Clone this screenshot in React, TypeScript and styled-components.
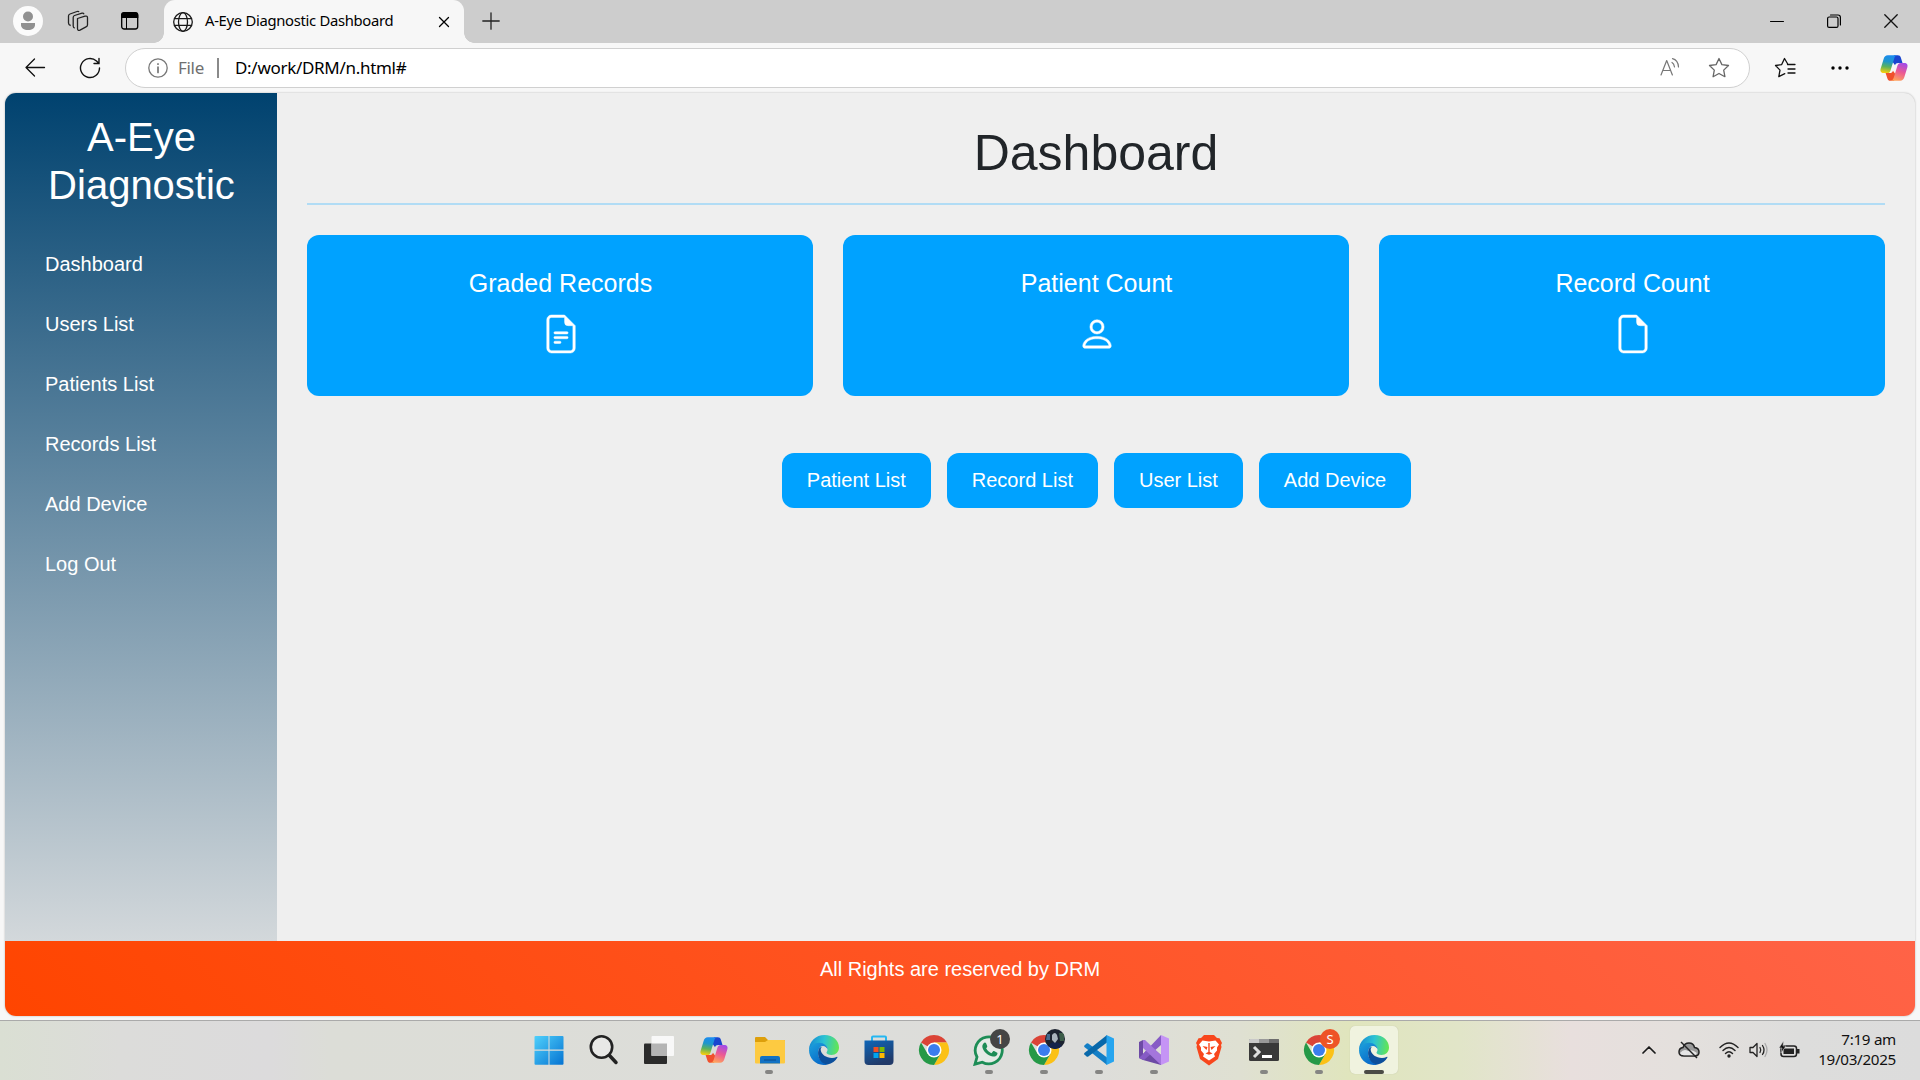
import React from 'react';
import styled, { createGlobalStyle } from 'styled-components';
import { BsFileEarmarkText, BsPerson, BsFileEarmark } from 'react-icons/bs';

const ui = '"Segoe UI", "Noto Sans", "Open Sans", sans-serif';

const Global = createGlobalStyle`
  * { box-sizing: border-box; }
  body { margin: 0; background: #f7f7f7; overflow: hidden; }
`;
const Screen = styled.div`
  width: 1920px; height: 1080px; display: flex; flex-direction: column;
  background: #f7f7f7; font-family: ${ui}; color: #000;
`;
const TabStrip = styled.header`
  height: 43px; background: #cdcdcd; display: flex; align-items: stretch; flex: none;
`;
const StripIcons = styled.div`
  width: 164px; display: flex; align-items: center; padding: 0 0 1px 13px;
  svg { display: block; flex: none; }
`;
const CollectionsIcon = styled.svg`margin-left: 24px;`;
const TabMenuIcon = styled.svg`margin-left: 31px;`;
const Tab = styled.div`
  width: 300px; background: #f7f7f7; border-radius: 11px 11px 0 0; display: flex; align-items: center;
  padding: 0 14px 0 9px; font-size: 14.8px; position: relative;
  &::before, &::after {
    content: ''; position: absolute; bottom: 0; width: 10px; height: 10px;
  }
  &::before { left: -10px; background: radial-gradient(circle at 0 0, #cdcdcd 9.5px, #f7f7f7 10px); }
  &::after { right: -10px; background: radial-gradient(circle at 100% 0, #cdcdcd 9.5px, #f7f7f7 10px); }
`;
const TabTitle = styled.span`
  margin-left: 12px; margin-right: auto; padding-bottom: 3px; line-height: 20px; letter-spacing: -0.3px; white-space: nowrap;
`;
const NewTab = styled.div`padding: 12px 0 0 18px;`;
const WindowButtons = styled.div`
  margin-left: auto; display: flex; gap: 43px; padding: 14px 22px 0 0;
`;
const AddressRow = styled.div`
  height: 50px; display: flex; align-items: center; flex: none; padding: 0 12px 0 24px;
`;
const ReloadIcon = styled.svg`margin-left: 33px;`;
const Address = styled.div`
  width: 1625px; height: 40px; border: 1px solid #d0d0d0; border-radius: 20px; background: #fff;
  margin-left: 24px; display: flex; align-items: center; padding: 0 19px 0 22px; font-size: 17px; letter-spacing: -0.3px;
`;
const Scheme = styled.span`color: #707070; margin-left: 10px; width: 39px; padding-bottom: 2px;`;
const Divider = styled.span`width: 2px; height: 20px; background: #8a8a8a; margin-right: 16px;`;
const Url = styled.span`padding-bottom: 2px; white-space: nowrap;`;
const AddressIcons = styled.div`margin-left: auto; display: flex; gap: 28px; align-items: center;`;
const ToolbarIcons = styled.div`margin-left: auto; display: flex; align-items: center; gap: 35px;`;
const CopilotButton = styled.div`display: flex; margin-left: -4px;`;

const Viewport = styled.div`
  flex: none; width: 1910px; height: 923px; margin: 0 5px; border-radius: 11px; overflow: hidden;
  background: #efefef; box-shadow: 0 0 2px #aaa; display: flex; flex-direction: column;
  font-family: Arial, "Liberation Sans", sans-serif;
`;
const Columns = styled.div`display: flex; height: 848px;`;
const Sidebar = styled.aside`
  width: 272px; background: linear-gradient(180deg, #00426f 0%, #d3d8db 100%); color: #fff; padding-top: 20px;
`;
const Brand = styled.h2`
  margin: 0 0 25px; font-size: 40px; line-height: 48px; font-weight: 400; text-align: center; padding-left: 1px;
`;
const Nav = styled.nav`display: flex; flex-direction: column; padding-left: 40px;`;
const NavLink = styled.a`height: 60px; line-height: 60px; font-size: 20px; color: #fff;`;
const Main = styled.main`flex: 1; padding: 30px;`;
const Title = styled.h1`
  margin: 0; height: 82px; font-size: 50px; line-height: 60px; font-weight: 400; text-align: center;
  color: #212529; border-bottom: 2px solid #b1dcf5;
`;
const Cards = styled.section`display: grid; grid-template-columns: repeat(3, 1fr); gap: 30px; margin-top: 30px;`;
const Card = styled.article`
  height: 161px; border-radius: 12px; background: #00a2ff; color: #fff; display: flex;
  flex-direction: column; align-items: center; padding: 33px 0 0 1px;
  svg { margin-top: 17px; display: block; stroke: #fff; stroke-width: 0.2px; overflow: visible; }
`;
const CardTitle = styled.h3`margin: 0; font-size: 25px; font-weight: 400; line-height: 30px;`;
const Actions = styled.div`display: flex; justify-content: center; gap: 16px; margin-top: 57px; padding-left: 1px;`;
const Action = styled.button`
  height: 55px; padding: 0 25px; border: 0; border-radius: 12px; background: #00a2ff; color: #fff;
  font: 20px Arial, "Liberation Sans", sans-serif;
`;
const Footer = styled.footer`
  flex: 1; background: linear-gradient(45deg, #ff4500, #ff6347); color: #fff; text-align: center;
  font-size: 20px; line-height: 30px; padding-top: 13px;
`;

const Taskbar = styled.footer`
  margin-top: 4px; height: 60px; border-top: 1px solid #aaa; display: flex; align-items: center; padding-bottom: 1px;
  background: linear-gradient(90deg, #dadfd3 0, #dcdcda 120px, #dcdbdc 270px, #dcddd7 330px, #dddddb 1080px, #dfe0d2 1240px, #e0e5bd 1350px, #e1e5c8 1460px, #e8dfdd 1570px, #e4e0dd 1680px, #dddddc 1800px, #dcdcdc);
`;
const Apps = styled.div`display: flex; margin-left: 525px; gap: 7px;`;
const AppSlot = styled.div<{ $active?: boolean; $running?: boolean }>`
  width: 48px; height: 48px; border-radius: 5px; position: relative;
  display: flex; align-items: center; justify-content: center;
  background: ${p => (p.$active ? '#f0f3df' : 'transparent')};
  box-shadow: ${p => (p.$active ? '0 0 1px #b9bc9f' : 'none')};
  svg { display: block; }
  &::after {
    content: ''; position: absolute; bottom: 0; left: 50%; transform: translateX(-50%);
    width: ${p => (p.$active ? 20 : 8)}px; height: 4px; border-radius: 2px;
    background: ${p => (p.$active ? '#4b4b46' : p.$running ? '#858583' : 'transparent')};
  }
`;
const Badge = styled.span<{ $bg: string }>`
  position: absolute; left: 25px; top: 3px; width: 20px; height: 20px; border-radius: 50%;
  background: ${p => p.$bg}; color: #fff; font-size: 13px; line-height: 20px; text-align: center; overflow: hidden;
`;
const Tray = styled.div`margin-left: auto; display: flex; align-items: center; padding-right: 24px;`;
const TrayIcon = styled.svg<{ $gap: number }>`margin-left: ${p => p.$gap}px;`;
const Clock = styled.div`
  width: 78px; margin-left: 18px; font-size: 15.2px; line-height: 20px; text-align: right; color: #111;
  white-space: nowrap; letter-spacing: -0.3px; display: flex; flex-direction: column; align-items: flex-end; padding-bottom: 2px;
`;

const Line = ({ w = 20, h = 20, c = '#1a1a1a', sw = 1.3, children }: any) => (
  <svg width={w} height={h} viewBox={`0 0 ${w} ${h}`} fill="none" stroke={c} strokeWidth={sw} strokeLinecap="round" strokeLinejoin="round">{children}</svg>
);

const Copilot = ({ id }: { id: string }) => (
  <svg width="28" height="26" viewBox="0 0 28 26">
    <defs>
      <linearGradient id={id + 'a'} x1=".5" y1="0" x2=".35" y2="1"><stop offset="0" stopColor="#1b8bf0" /><stop offset=".35" stopColor="#1e96cc" /><stop offset=".65" stopColor="#5cb25c" /><stop offset="1" stopColor="#f9cf0c" /></linearGradient>
      <linearGradient id={id + 'b'} x1=".7" y1="0" x2=".35" y2="1"><stop offset="0" stopColor="#a34be8" /><stop offset=".5" stopColor="#ec5a93" /><stop offset="1" stopColor="#ffa35c" /></linearGradient>
    </defs>
    <path d="M14 .3h3.800c1.700 0 2.500.8 3 2.300L22.500 8h-4.300c-1.800 0-2.600.7-3.200 2.300L12 6z" fill="#1a45cf" />
    <path d="M14 25.700h-3.600c-1.700 0-2.500-.8-3-2.300L5.600 18h4.200c1.800 0 2.600-.7 3.200-2.300l3 4.300z" fill="#f0502c" />
    <path d="M7.800.3h9.500c-1.800.3-2.500 1.300-3 2.900l-3.700 12c-.6 1.900-1.400 2.900-3.500 2.900H3.600C.6 18.100 0 15.900.7 13.600L3.700 3.800C4.400 1.600 5.600.3 7.800.3z" fill={`url(#${id}a)`} />
    <path d="M20.200 25.700h-9.500c1.800-.3 2.500-1.300 3-2.900l3.700-12c.6-1.900 1.400-2.900 3.500-2.900h3.500c3 0 3.600 2.200 2.900 4.500l-3 9.800c-.7 2.200-1.900 3.500-4.100 3.500z" fill={`url(#${id}b)`} />
  </svg>
);
const App32 = ({ children }: any) => <svg width="32" height="32" viewBox="0 0 32 32">{children}</svg>;

const Edge = ({ id }: { id: string }) => (
  <App32>
    <defs>
      <linearGradient id={id + 'a'} x1="0" y1=".3" x2="1" y2=".4"><stop offset="0" stopColor="#1689d4" /><stop offset=".5" stopColor="#2cc3d3" /><stop offset="1" stopColor="#63e653" /></linearGradient>
      <linearGradient id={id + 'b'} x1="0" y1="0" x2=".6" y2="1"><stop offset="0" stopColor="#1da2dd" /><stop offset="1" stopColor="#0869c8" /></linearGradient>
    </defs>
    <path d="M1 16C1 7.300 8 1 16.500 1 25.500 1 31 7 31 13.500c0 4.500-3.200 7.500-7.500 7.500-3 0-5-1-5-2.200 0-.8 1-1.300 1-3.300 0-2.800-2.700-5.500-6.500-5.500C7 10 2.500 13 1 16z" fill={`url(#${id}a)`} />
    <path d="M1 16c1.200-4.500 5.500-7.300 10-7.300 5 0 8.500 3 8.500 6.500-.8-1.900-2.500-3.200-4.500-3.200-3 0-5 3.300-5 7 0 5.500 4.500 10 9.500 11.400C9.500 33 1 25.500 1 16z" fill={`url(#${id}b)`} />
    <path d="M11.800 13.400C8 18 10.500 29.600 19.500 30.400c4.500-.6 8-3.200 9.900-6.800.4-.7-.3-1-.8-.7-1.500.8-3 1.100-4.600 1.100-6 0-10.500-3.400-11.200-7.400-.2-1.200-.2-2.400 1-3.600z" fill="#0c4f9c" />
  </App32>
);
const Chrome = () => (
  <App32>
    <path d="M16 16 3 8.500A15 15 0 0 1 29 8.500H16z" fill="#db4437" />
    <path d="M16 8.500H29A15 15 0 0 1 16 31l6.500-11.300z" fill="#fbc116" />
    <path d="M3 8.500A15 15 0 0 0 16 31l6.500-11.200L16 16 9.600 19.800z" fill="#259947" />
    <circle cx="16" cy="16" r="7.500" fill="#fff" /><circle cx="16" cy="16" r="6" fill="#3b7ded" />
  </App32>
);
const Start = () => (
  <App32>
    <defs><linearGradient id="st" x1="0" y1="0" x2="1" y2="1"><stop offset="0" stopColor="#4fd0fb" /><stop offset="1" stopColor="#0573d2" /></linearGradient></defs>
    <path d="M2.500 2H15.500v13.500H1.500V3q0-1 1-1zM16.500 2h13q1 0 1 1v12.500h-14zM1.500 16.700h14v14h-13q-1 0-1-1zM16.500 16.700h14v13q0 1-1 1h-13z" fill="url(#st)" />
  </App32>
);
const Search = () => <App32><circle cx="13.500" cy="13" r="10.700" fill="#e8e8e6" stroke="#222" strokeWidth="2.600" /><path d="m21.500 21.500 6.500 7" stroke="#222" strokeWidth="3.500" strokeLinecap="round" /></App32>;
const TaskView = () => (
  <App32>
    <rect x="1" y="9.500" width="23" height="20.500" rx="1" fill="#2b2b2b" />
    <rect x="8.500" y="2" width="22.500" height="20" rx="1" fill="#f8f8f8" />
    <path d="M8.500 9.500H24V22H8.500z" fill="#b4b4b4" />
  </App32>
);
const Folder = () => (
  <App32>
    <path d="M2 4q0-1 1-1h9l3 3h16q1 0 1 1v6H2z" fill="#dd9f0b" />
    <path d="M2 8h10l3-2h16q1 0 1 1v21.500q0 1-1 1H3q-1 0-1-1z" fill="#fdca41" />
    <path d="M7 29.500V24q0-2 2-2h16q2 0 2 2v5.500z" fill="#1272c4" /><path d="M11 26h12" stroke="#0b4a8a" />
  </App32>
);
const Store = () => (
  <App32>
    <defs><linearGradient id="ms" x1="0" y1="0" x2=".4" y2="1"><stop offset="0" stopColor="#0f66b8" /><stop offset="1" stopColor="#213a69" /></linearGradient></defs>
    <path d="M9 8V3.500q0-1 1-1h12q1 0 1 1V8" fill="none" stroke="#25b7f1" strokeWidth="2" />
    <path d="M1.500 6.500h29V27q0 4-4 4h-21q-4 0-4-4z" fill="url(#ms)" />
    <path d="M10.500 13h5v5h-5z" fill="#f25022" /><path d="M16.500 13h5v5h-5z" fill="#7fba00" />
    <path d="M10.500 19h5v5h-5z" fill="#00a4ef" /><path d="M16.500 19h5v5h-5z" fill="#ffb900" />
  </App32>
);
const WhatsApp = () => (
  <App32>
    <path d="M2 30.200 4 23A13.500 13.500 0 1 1 9.300 28.200z" fill="#e5ebe6" stroke="#1d8d56" strokeWidth="2.800" />
    <path d="M10.700 9.200c.8-.9 2-.8 2.500.3l1 2.400c.3.700-.2 1.400-1.100 2.400 1.400 2.600 3 3.900 5.300 4.900l1.500-1.700c.5-.6 1-.6 1.600-.3l2.300 1.200c.8.400.8.900.5 1.900-.6 1.700-2.500 2.600-4.400 2.200-5.500-1.100-9.600-5.300-10.500-9.300-.3-1.600.4-3.100 1.300-4z" fill="#1d8d56" />
  </App32>
);
const VSCode = () => (
  <App32>
    <path d="m1.400 11.500 2.200-2q.8-.6 1.700 0L24 23.500V31L1.400 13q-.6-.8 0-1.500z" fill="#147fc6" />
    <path d="m1.400 20.500 2.200 2q.8.600 1.700 0L24 8.500V1L1.400 19q-.6.800 0 1.500z" fill="#0868aa" />
    <path d="M23.500 1 31 4.500v23L23.500 31z" fill="#27a5ef" />
  </App32>
);
const VisualStudio = () => (
  <App32>
    <path d="m1 8 4-2 18 15v10L5 26 1 24zm4 4v8l4-4z" fill="#6d4aa5" fillRule="evenodd" />
    <path d="M23 1v10L6 26l-5-2 4-4L23 1z" fill="#865bc5" />
    <path d="M23 1l8 3.500v23L23 31z" fill="#c594f5" />
    <path d="M7 6 23 21v10L5 14V6z" fill="#a476dc" />
  </App32>
);
const Brave = () => (
  <App32>
    <path d="m11 1-3 3-2.500.3L3 9l1 2-.5 2 3.500 12 9 6.500 9-6.500 3.500-12-.5-2 1-2-2.500-4.700L24 4l-3-3z" fill="#f8471d" />
    <path d="m9.500 6.500 6.500 1 6.500-1 3.500 4-2 3v3l-3 3.500 1 2.500-6 4-6-4 1-2.500-3-3.500v-3l-2-3z" fill="#fff" />
    <path d="m9.500 12 5 1-1 3zM22.500 12l-5 1 1 3zM12.500 19.500l3.500-2 3.500 2-3.500 1.300zM15.300 9h1.400v9h-1.400z" fill="#f8471d" />
  </App32>
);
const Terminal = () => (
  <App32>
    <rect x="1" y="5" width="30" height="22" rx="1.500" fill="#393939" />
    <path d="M1 9V6q0-1 1-1h9v4z" fill="#c9c9c9" /><path d="M11 5h10v4H11z" fill="#999" /><path d="M21 5h9q1 0 1 1v3H21z" fill="#6d6d6d" />
    <path d="m6 13 5 5-5 5" fill="none" stroke="#dedede" strokeWidth="3" /><path d="M14 22.500h10" stroke="#fff" strokeWidth="3" />
  </App32>
);

const navItems = ['Dashboard', 'Users List', 'Patients List', 'Records List', 'Add Device', 'Log Out'];
const cards = [
  { title: 'Graded Records', Icon: BsFileEarmarkText },
  { title: 'Patient Count', Icon: BsPerson },
  { title: 'Record Count', Icon: BsFileEarmark },
];
const actions = ['Patient List', 'Record List', 'User List', 'Add Device'];

export default function App() {
  return (
    <Screen>
      <Global />
      <TabStrip>
        <StripIcons>
          <svg width="30" height="30" viewBox="0 0 30 30"><circle cx="15" cy="15" r="15" fill="#fbfbfb" /><circle cx="15" cy="10.500" r="5" fill="#919191" /><path d="M8 17h14v2c0 3-3 5-7 5s-7-2-7-5z" fill="#919191" /></svg>
          <CollectionsIcon width="22" height="22" viewBox="0 0 22 22" fill="none" stroke="#222" strokeWidth="1.300" strokeLinejoin="round">
            <path d="m10.500 8.500 7.500-2.300q2.500-.7 2.500 1.500v7q0 1.500-1.500 2.200l-6 3.200q-2.500 1-2.500-1.500v-8.600q0-1.200 0-1.500zM7.700 18q-1.500-.3-1.500-2V7.500q0-1.500 1.300-2l7.500-2.300q1.500-.3 2 1M3.700 15.500Q1.500 15 1.500 13V6q0-1.500 1.500-2l7-2.500q1.500-.5 2 .5" />
          </CollectionsIcon>
          <TabMenuIcon width="20" height="20" viewBox="0 0 20 20"><rect x="1.700" y="2" width="16" height="16" rx="2.500" fill="none" stroke="#000" strokeWidth="1.300" /><path d="M1 7V4q0-3 3-3h11.300q3 0 3 3v3z" /><path d="M6.500 7v11" stroke="#000" /></TabMenuIcon>
        </StripIcons>
        <Tab>
          <Line sw={1.300}><circle cx="10" cy="10" r="9.300" /><ellipse cx="10" cy="10" rx="4.500" ry="9.300" /><path d="M1.500 6.700h17M1.500 13.300h17" /></Line>
          <TabTitle>A-Eye Diagnostic Dashboard</TabTitle>
          <Line w={12} h={12} c="#000"><path d="m1.500 1.500 9 9m0-9-9 9" /></Line>
        </Tab>
        <NewTab><Line w={18} h={18} c="#222"><path d="M9 .8v16.400M.8 9h16.400" /></Line></NewTab>
        <WindowButtons>
          <Line w={14} h={14} c="#000" sw={1}><path d="M.5 7.500h13" /></Line>
          <Line w={14} h={14} c="#000" sw={1.200}><rect x=".6" y="3" width="10.400" height="10.400" rx="1.500" /><path d="M3.500 1H11q2.400 0 2.400 2.400V11" /></Line>
          <Line w={14} h={14} c="#111"><path d="m.8.800 12.400 12.400M13.200.8.800 13.200" /></Line>
        </WindowButtons>
      </TabStrip>
      <AddressRow>
        <Line w={22} h={20} c="#111"><path d="M20.500 9.500H2m8.500-8.500L2 9.500l8.500 8.500" /></Line>
        <ReloadIcon width="22" height="22" viewBox="0 0 22 22" fill="none" stroke="#111" strokeWidth="1.400" strokeLinecap="round"><path d="M20.500 11a9.500 9.500 0 1 1-3-6.900L20 6.500M20 1.500v5h-5" /></ReloadIcon>
        <Address>
          <Line c="#777"><circle cx="10" cy="10" r="9.200" /><path d="M10 9v5.500M10 5.900v.3" strokeWidth="1.700" /></Line>
          <Scheme>File</Scheme><Divider />
          <Url>D:/work/DRM/n.html#</Url>
          <AddressIcons>
            <Line c="#777" sw={1.200}><path d="m1 17 5.700-14.500L12.400 17M3 12.500h7.400M12 4.500q2 1 2.500 4.500M12.500.7Q18 2 18.500 9" /></Line>
            <Line w={22} h={22} c="#666"><path d="m11 1.500 2.900 6.100 6.600.9-4.800 4.600 1.200 6.600-5.900-3.200-5.900 3.200 1.200-6.600L1.500 8.500l6.600-.9z" /></Line>
          </AddressIcons>
        </Address>
        <ToolbarIcons>
          <Line w={22} h={22} c="#111"><path d="M14 7.500 10.500 1.500 7.700 7.600 1.500 8.500l4.500 4.600-1.200 6.600 6-3M13.500 7.500h7.500M14 12h7M14 16h7" /></Line>
          <svg width="18" height="4" viewBox="0 0 18 4"><circle cx="2" cy="2" r="1.700" /><circle cx="9" cy="2" r="1.700" /><circle cx="16" cy="2" r="1.700" /></svg>
          <CopilotButton><Copilot id="c1" /></CopilotButton>
        </ToolbarIcons>
      </AddressRow>
      <Viewport>
        <Columns>
          <Sidebar>
            <Brand>A-Eye<br />Diagnostic</Brand>
            <Nav>{navItems.map(n => <NavLink key={n}>{n}</NavLink>)}</Nav>
          </Sidebar>
          <Main>
            <Title>Dashboard</Title>
            <Cards>
              {cards.map(({ title, Icon }) => <Card key={title}><CardTitle>{title}</CardTitle><Icon size={38} /></Card>)}
            </Cards>
            <Actions>{actions.map(a => <Action key={a}>{a}</Action>)}</Actions>
          </Main>
        </Columns>
        <Footer>All Rights are reserved by DRM</Footer>
      </Viewport>
      <Taskbar>
        <Apps>
          <AppSlot><Start /></AppSlot>
          <AppSlot><Search /></AppSlot>
          <AppSlot><TaskView /></AppSlot>
          <AppSlot><Copilot id="c2" /></AppSlot>
          <AppSlot $running><Folder /></AppSlot>
          <AppSlot><Edge id="e1" /></AppSlot>
          <AppSlot><Store /></AppSlot>
          <AppSlot><Chrome /></AppSlot>
          <AppSlot $running><WhatsApp /><Badge $bg="#454545">1</Badge></AppSlot>
          <AppSlot $running><Chrome />
            <Badge $bg="#1c2330"><svg width="20" height="20" viewBox="0 0 20 20"><path d="M3 20q1-7 7-7t8 7z" fill="#14234a" /><path d="M7 6q3-4 5 0l1 4-3 4-3-3z" fill="#a9b3bc" /><path d="M14 4h5v8h-4z" fill="#3c5c49" /><path d="M2 5h3v6H1z" fill="#45688c" /></svg></Badge>
          </AppSlot>
          <AppSlot $running><VSCode /></AppSlot>
          <AppSlot $running><VisualStudio /></AppSlot>
          <AppSlot><Brave /></AppSlot>
          <AppSlot $running><Terminal /></AppSlot>
          <AppSlot $running><Chrome /><Badge $bg="#ee5426">S</Badge></AppSlot>
          <AppSlot $active><Edge id="e2" /></AppSlot>
        </Apps>
        <Tray>
          <Line w={14} h={8} sw={1.700}><path d="m1 7 6-6 6 6" /></Line>
          <TrayIcon $gap={22} width="22" height="18" viewBox="0 0 22 18" fill="none" stroke="#222" strokeWidth="1.500"><path d="M6 15q-5 0-5-4t4-4.500Q6.500 2 11 2t5.500 4.500Q21 7 21 11t-4 4z" fill="#999" /><path d="M2 12q4-5 8-2 4-2 9 2-1 2.200-3 2.200H6q-3 0-4-2.200z" fill="#e6e6e6" stroke="none" /><path d="m3 1 16 16" /></TrayIcon>
          <TrayIcon $gap={19} width="20" height="16" viewBox="0 0 20 16" fill="none" stroke="#222" strokeWidth="1.400" strokeLinecap="round"><path d="M1 5.500q9-9 18 0M4 8.500q6-6 12 0M6.500 11.500q3.500-3.500 7 0" /><circle cx="10" cy="14" r="1" fill="#222" /></TrayIcon>
          <TrayIcon $gap={10} width="20" height="16" viewBox="0 0 20 16" fill="none" stroke="#222" strokeWidth="1.300" strokeLinecap="round" strokeLinejoin="round"><path d="M1 5.500h3l4-4v13l-4-4H1zM11 5.500q1.500 2.500 0 5M13.500 3.500q3 4.500 0 9" /><path d="M16 1.500q4 6.500 0 13" stroke="#aaa" /></TrayIcon>
          <TrayIcon $gap={10} width="21" height="18" viewBox="0 0 21 18"><rect x="2" y="5" width="15.500" height="10.500" rx="2.500" fill="none" stroke="#222" strokeWidth="1.500" /><rect x="4.500" y="7.500" width="10.500" height="5.500" fill="#222" /><path d="M18 8h2.500v4.500H18z" fill="#222" /><path d="M4.500 0 0 7h3l-1 5 5-7H4z" fill="#111" stroke="#ddd" strokeWidth=".5" /></TrayIcon>
          <Clock><span>7:19 am</span><span>19/03/2025</span></Clock>
        </Tray>
      </Taskbar>
    </Screen>
  );
}
